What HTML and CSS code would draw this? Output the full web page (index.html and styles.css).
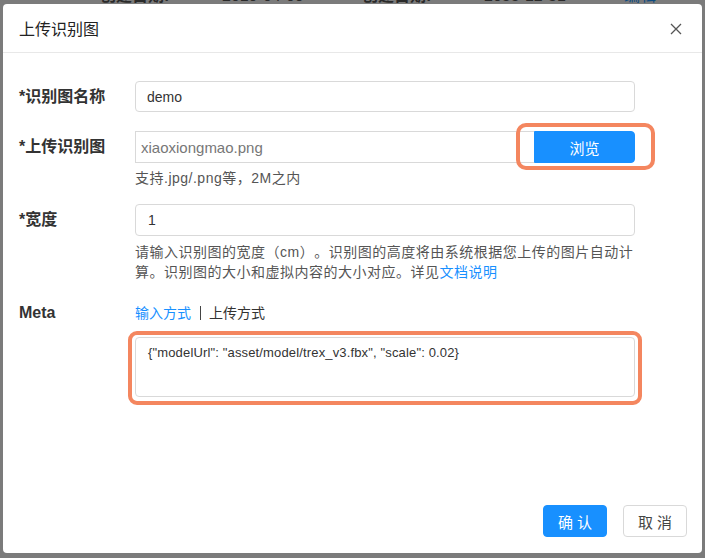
FILE: index.html
```html
<!DOCTYPE html>
<html lang="zh-CN">
<head>
    <meta charset="UTF-8">
    <meta name="viewport" content="width=device-width, initial-scale=1.0">
    <title>上传识别图</title>
    <link rel="stylesheet" href="styles.css">
</head>
<body>
    <div class="page">
        <div class="bg-row">
            <span class="bg-label">创建日期:</span>
            <span class="bg-value">2019-04-09</span>
            <span class="bg-label">创建日期:</span>
            <span class="bg-value">2055-12-31</span>
            <span class="bg-link">编辑</span>
        </div>
    </div>

    <div class="modal">
        <div class="modal-header">
            <span class="modal-title">上传识别图</span>
            <span class="modal-close">
                <svg width="12" height="12" viewBox="0 0 12 12">
                    <path d="M1 1 L11 11 M11 1 L1 11" stroke="#555" stroke-width="1.3" fill="none"/>
                </svg>
            </span>
        </div>

        <div class="modal-body">
            <div class="form-row row-name">
                <div class="form-label">*识别图名称</div>
                <div class="form-control">
                    <input class="input" type="text" value="demo">
                </div>
            </div>

            <div class="form-row row-upload">
                <div class="form-label">*上传识别图</div>
                <div class="form-control">
                    <div class="upload-group">
                        <input class="input file-name" type="text" value="xiaoxiongmao.png" readonly>
                        <div class="mark mark-btn">
                            <button class="btn btn-primary btn-browse">浏览</button>
                        </div>
                    </div>
                    <div class="hint">支持.jpg/.png等，2M之内</div>
                </div>
            </div>

            <div class="form-row row-width">
                <div class="form-label">*宽度</div>
                <div class="form-control">
                    <input class="input" type="text" value="1">
                    <div class="hint">请输入识别图的宽度（cm）。识别图的高度将由系统根据您上传的图片自动计算。识别图的大小和虚拟内容的大小对应。详见<a class="link" href="#">文档说明</a></div>
                </div>
            </div>

            <div class="form-row row-meta">
                <div class="form-label">Meta</div>
                <div class="form-control">
                    <div class="tabs">
                        <span class="tab active">输入方式</span>
                        <span class="tab-sep"></span>
                        <span class="tab">上传方式</span>
                    </div>
                    <div class="mark mark-area">
                        <textarea class="textarea">{"modelUrl": "asset/model/trex_v3.fbx", "scale": 0.02}</textarea>
                    </div>
                </div>
            </div>
        </div>

        <div class="modal-footer">
            <button class="btn btn-primary">确 认</button>
            <button class="btn btn-default">取 消</button>
        </div>
    </div>
</body>
</html>
```

FILE: styles.css
```css
body {
    margin: 0;
    font-family: "Liberation Sans", "Noto Sans CJK SC", sans-serif;
    background: #7b7b7b;
    color: #333;
    width: 705px;
    height: 558px;
    overflow: hidden;
    position: relative;
    text-spacing-trim: space-all;
}
.page {
    height: 558px;
}
.bg-row {
    display: flex;
    margin-top: -13px;
    padding-left: 100px;
    font-size: 16px;
    line-height: 18px;
    color: #2a2a2a;
}
.bg-label {
    font-weight: bold;
    width: 122px;
}
.bg-value {
    width: 140px;
}
.bg-link {
    color: #0c4a80;
}

.modal {
    position: absolute;
    left: 3px;
    top: 4px;
    width: 699px;
    height: 549px;
    background: #fff;
    border-radius: 4px;
    display: flex;
    flex-direction: column;
}
.modal-header {
    height: 48px;
    border-bottom: 1px solid #e8e8e8;
    display: flex;
    align-items: center;
    justify-content: space-between;
    padding: 0 20px 0 16px;
}
.modal-title {
    font-size: 16px;
    color: #222;
}
.modal-close {
    display: flex;
    margin-top: 2px;
}

.modal-body {
    padding: 28px 0 0 16px;
}
.form-row {
    display: flex;
}
.form-label {
    width: 116px;
    font-size: 16px;
    font-weight: bold;
    line-height: 31px;
    color: #333;
}
.form-control {
    width: 500px;
}
.row-upload {
    margin-top: 19px;
}
.row-width {
    margin-top: 16px;
}
.row-meta {
    margin-top: 21px;
}
.row-meta .form-label {
    line-height: 20px;
}

.input {
    display: block;
    box-sizing: border-box;
    width: 100%;
    height: 31px;
    border: 1px solid #d9d9d9;
    border-radius: 4px;
    padding: 0 11px;
    font-family: inherit;
    font-size: 14px;
    color: #333;
    outline: none;
}
.row-width .input {
    height: 32px;
    padding-left: 12px;
}
.upload-group {
    display: flex;
    height: 32px;
}
.file-name {
    flex: 1;
    height: 32px;
    border-radius: 0;
    border-right: none;
    padding-left: 5px;
    font-size: 15px;
    color: #777;
}
.mark {
    position: relative;
}
.mark::after {
    content: "";
    position: absolute;
    border: 4px solid #f4865f;
    border-radius: 10px;
    pointer-events: none;
}
.mark-btn::after {
    top: -8px;
    bottom: -7px;
    left: -18px;
    right: -20px;
}
.mark-area {
    margin-top: 14px;
}
.mark-area::after {
    top: -6px;
    bottom: -8px;
    left: -7px;
    right: -7px;
    border-radius: 9px;
}

.hint {
    margin-top: 5px;
    font-size: 14px;
    line-height: 20px;
    color: #555;
    letter-spacing: 0.5px;
}
.row-width .hint {
    margin-top: 6px;
}
.link {
    color: #1890ff;
    text-decoration: none;
}

.tabs {
    display: flex;
    align-items: center;
    font-size: 14px;
    line-height: 20px;
}
.tab {
    color: #333;
}
.tab.active {
    color: #1890ff;
}
.tab-sep {
    width: 1px;
    height: 14px;
    background: #444;
    margin: 0 8px 0 9px;
}

.textarea {
    display: block;
    box-sizing: border-box;
    width: 100%;
    height: 60px;
    border: 1px solid #d9d9d9;
    border-radius: 4px;
    padding: 6px 12px;
    font-family: inherit;
    font-size: 13px;
    line-height: 18px;
    letter-spacing: 0.15px;
    color: #333;
    resize: none;
    outline: none;
}

.btn {
    box-sizing: border-box;
    height: 32px;
    width: 64px;
    border-radius: 4px;
    font-family: inherit;
    font-size: 15px;
    cursor: pointer;
}
.btn-primary {
    background: #1890ff;
    border: 1px solid #1890ff;
    color: #fff;
}
.btn-default {
    background: #fff;
    border: 1px solid #d9d9d9;
    color: #444;
}
.btn-browse {
    width: 101px;
    height: 32px;
    border-radius: 0 4px 4px 0;
    display: block;
}

.modal-footer {
    margin-top: auto;
    display: flex;
    justify-content: flex-end;
    gap: 16px;
    padding: 0 15px 16px 0;
}
```
